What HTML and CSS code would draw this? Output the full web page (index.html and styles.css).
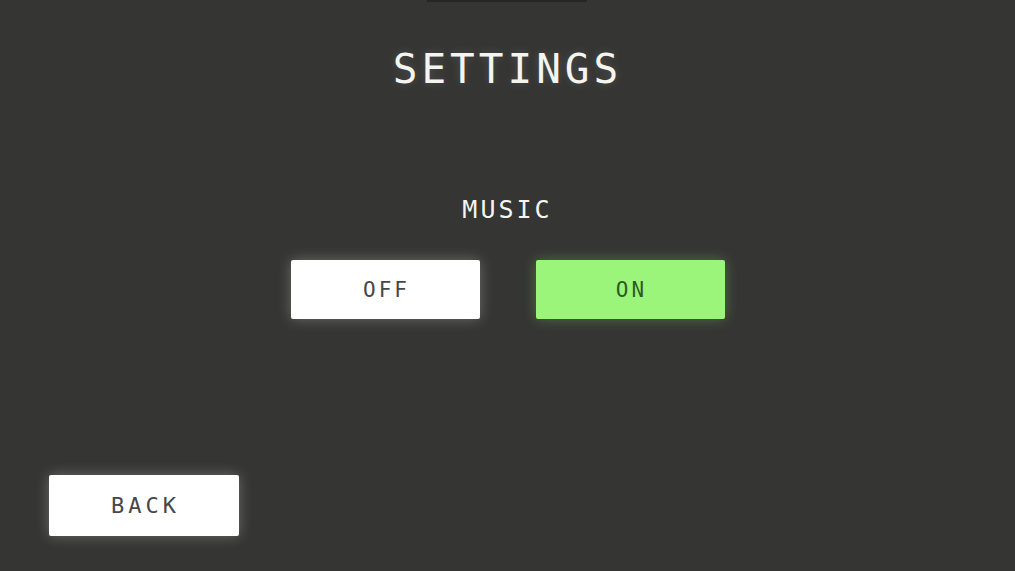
FILE: index.html
```html
<!DOCTYPE html>
<html lang="en">
<head>
    <meta charset="UTF-8">
    <meta name="viewport" content="width=device-width, initial-scale=1.0">
    <title>Settings</title>
    <link rel="stylesheet" href="styles.css">
</head>
<body>
    <div class="topbar"></div>
    <div class="screen">
        <h1 class="title">SETTINGS</h1>

        <section class="option">
            <h2 class="option-label">MUSIC</h2>
            <div class="toggle">
                <button class="btn">OFF</button>
                <button class="btn btn-active">ON</button>
            </div>
        </section>

        <div class="footer">
            <button class="btn btn-back">BACK</button>
        </div>
    </div>
</body>
</html>
```

FILE: styles.css
```css
html, body {
    height: 100%;
}
body {
    margin: 0;
    background-color: #353533; /* dark warm grey */
    font-family: 'DejaVu Sans Mono', 'Liberation Mono', monospace;
    color: #f4f4f0;
    overflow: hidden;
    position: relative;
}
.topbar {
    position: absolute;
    top: 0;
    left: 427px;
    width: 160px;
    height: 2px;
    background: #262626;
}
.screen {
    height: 100%;
    display: flex;
    flex-direction: column;
    align-items: center;
    box-sizing: border-box;
    padding: 49px 0 35px;
}
.title {
    margin: 0;
    font-size: 41px;
    font-weight: normal;
    line-height: 1;
    letter-spacing: 4px;
    text-shadow: 0 0 8px rgba(255,255,255,0.15);
}
.option {
    display: flex;
    flex-direction: column;
    align-items: center;
    margin-top: 107px;
}
.option-label {
    margin: 0;
    font-size: 25px;
    font-weight: normal;
    line-height: 1;
    letter-spacing: 3px;
}
.toggle {
    display: flex;
    gap: 56px;
    margin-top: 38px;
}
.btn {
    width: 189px;
    height: 59px;
    border: none;
    border-radius: 2px;
    background: #ffffff;
    color: #474747;
    font-family: inherit;
    font-size: 21px;
    letter-spacing: 3px;
    padding: 0 0 0 3px;
    box-shadow: 0 0 14px rgba(255,255,250,0.28);
    cursor: pointer;
}
.btn-active {
    background: #9af57a; /* bright green */
    color: #2e5a24;
    box-shadow: 0 0 14px rgba(154,245,122,0.3);
}
.footer {
    margin-top: auto;
    align-self: flex-start;
    padding-left: 49px;
}
.btn-back {
    width: 190px;
    height: 61px;
    font-size: 22px;
    letter-spacing: 4px;
}
```
